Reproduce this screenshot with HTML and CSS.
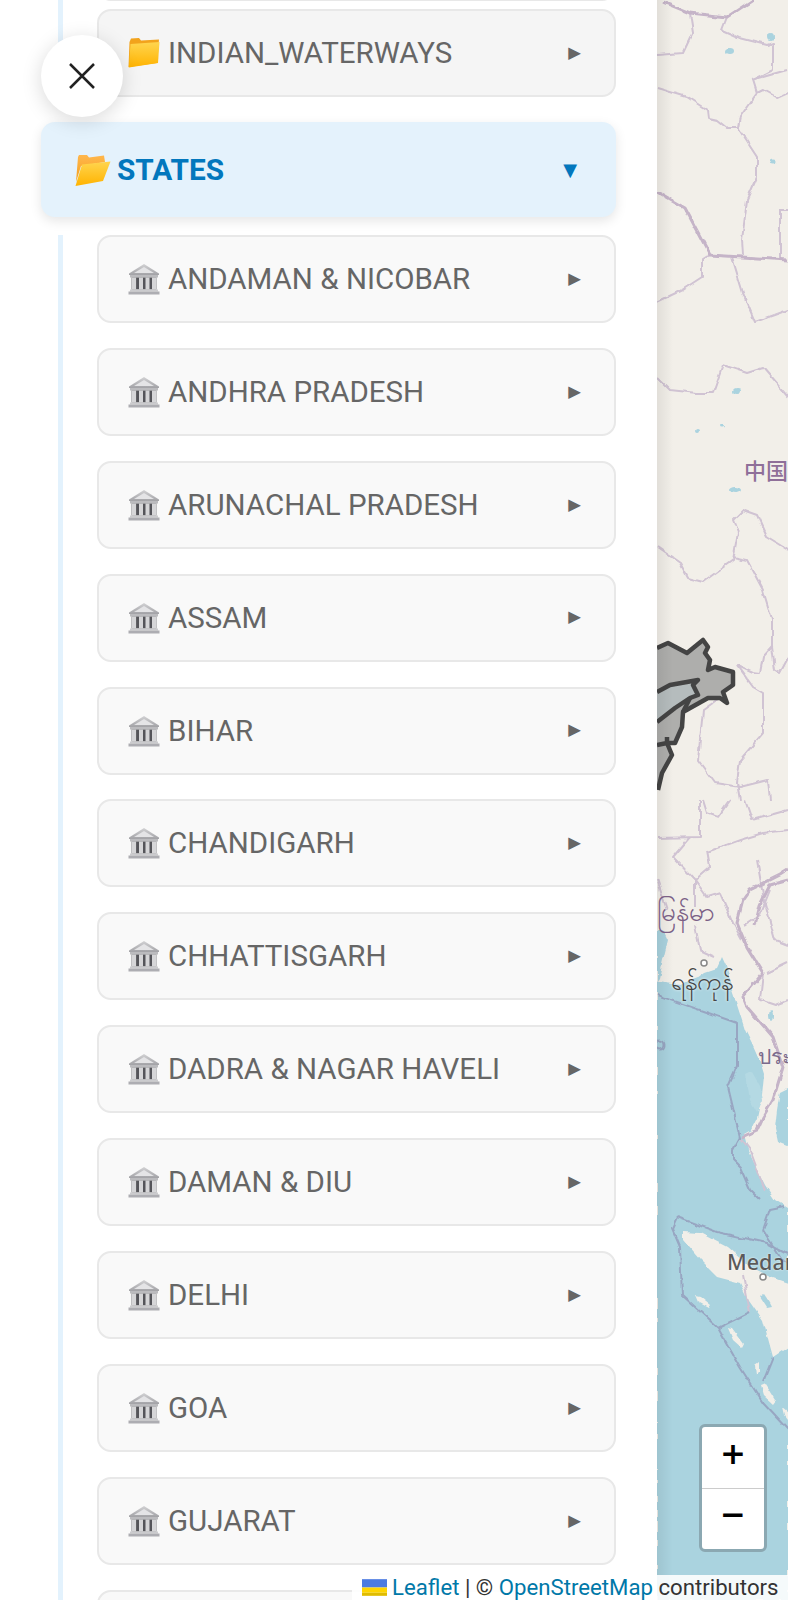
FILE: index.html
```html
<!DOCTYPE html>
<html lang="en">
<head>
<meta charset="utf-8">
<title>Layers</title>
<link rel="stylesheet" href="styles.css">
</head>
<body>
<svg class="defs" width="0" height="0" aria-hidden="true">
  <defs>
    <linearGradient id="fy" x1="0" y1="0" x2="0" y2="1"><stop offset="0" stop-color="#ffd54f"/><stop offset="1" stop-color="#ffb300"/></linearGradient>
    <linearGradient id="fo" x1="0" y1="0" x2="0" y2="1"><stop offset="0" stop-color="#ffb74d"/><stop offset="1" stop-color="#f59f1a"/></linearGradient>
    <linearGradient id="roof" x1="0" y1="0" x2="0" y2="1"><stop offset="0" stop-color="#d2d2d4"/><stop offset="1" stop-color="#a2a2a6"/></linearGradient>
    <linearGradient id="shade"><stop offset="0" stop-color="#000" stop-opacity=".07"/><stop offset="1" stop-color="#000" stop-opacity="0"/></linearGradient>
    <filter id="wiggle" x="-5%" y="-5%" width="110%" height="110%"><feTurbulence type="fractalNoise" baseFrequency=".09" numOctaves="2" seed="4"/><feDisplacementMap in="SourceGraphic" scale="5" xChannelSelector="R" yChannelSelector="G"/></filter>
    <symbol id="bank" viewBox="0 0 32 32">
      <path d="M16 1 31 10.500V12H1V10.500Z" fill="url(#roof)"/>
      <path d="M16 4 26 10H6Z" fill="#e4e4e6"/>
      <rect x="2" y="12" width="28" height="2.500" fill="#bbbbbe"/>
      <rect x="3.500" y="14.500" width="25" height="12" fill="#55555a"/>
      <rect x="3.500" y="14.500" width="4.600" height="12" fill="#d6d6d8"/>
      <rect x="11" y="14.500" width="4" height="12" fill="#d6d6d8"/>
      <rect x="17.500" y="14.500" width="4" height="12" fill="#d6d6d8"/>
      <rect x="24" y="14.500" width="4.600" height="12" fill="#d6d6d8"/>
      <rect x="2" y="26.500" width="28" height="2" fill="#cbcbce"/>
      <rect x=".5" y="28.500" width="31" height="3" fill="#adadb2"/>
    </symbol>
    <symbol id="folder" viewBox="0 0 32 32">
      <path d="M1.500 5 3 1.500 11 1 13 3.500 31 2.500 29 26 .5 30Z" fill="#f2a31c"/>
      <path d="M2.500 7 31.500 5 30 26 .8 30.500Z" fill="url(#fy)"/>
    </symbol>
    <symbol id="folder-open" viewBox="0 0 36 32">
      <path d="M1 28 3 3 4 1 12 1 14 3.500 29 1.500 30 8 6 12Z" fill="url(#fo)"/>
      <path d="M7 10.500 35.500 7.500 28 27 .5 32Z" fill="url(#fy)"/>
    </symbol>
  </defs>
</svg>

<div class="app">
  <aside class="sidebar">
    <div class="branch branch-top">
      <div class="row row-stub"></div>
      <div class="row row-folder">
        <svg class="ico ico-folder"><use href="#folder"/></svg>
        <span class="label">INDIAN_WATERWAYS</span><span class="arrow">▶</span>
      </div>
    </div>
    <div class="open-row">
      <svg class="ico ico-open"><use href="#folder-open"/></svg>
      <span class="open-label">STATES</span><span class="arrow-down">▼</span>
    </div>
    <div class="branch branch-states">
      <div class="row"><svg class="ico ico-bank"><use href="#bank"/></svg><span class="label">ANDAMAN &amp; NICOBAR</span><span class="arrow">▶</span></div>
      <div class="row"><svg class="ico ico-bank"><use href="#bank"/></svg><span class="label">ANDHRA PRADESH</span><span class="arrow">▶</span></div>
      <div class="row"><svg class="ico ico-bank"><use href="#bank"/></svg><span class="label">ARUNACHAL PRADESH</span><span class="arrow">▶</span></div>
      <div class="row"><svg class="ico ico-bank"><use href="#bank"/></svg><span class="label">ASSAM</span><span class="arrow">▶</span></div>
      <div class="row"><svg class="ico ico-bank"><use href="#bank"/></svg><span class="label">BIHAR</span><span class="arrow">▶</span></div>
      <div class="row"><svg class="ico ico-bank"><use href="#bank"/></svg><span class="label">CHANDIGARH</span><span class="arrow">▶</span></div>
      <div class="row"><svg class="ico ico-bank"><use href="#bank"/></svg><span class="label">CHHATTISGARH</span><span class="arrow">▶</span></div>
      <div class="row"><svg class="ico ico-bank"><use href="#bank"/></svg><span class="label">DADRA &amp; NAGAR HAVELI</span><span class="arrow">▶</span></div>
      <div class="row"><svg class="ico ico-bank"><use href="#bank"/></svg><span class="label">DAMAN &amp; DIU</span><span class="arrow">▶</span></div>
      <div class="row"><svg class="ico ico-bank"><use href="#bank"/></svg><span class="label">DELHI</span><span class="arrow">▶</span></div>
      <div class="row"><svg class="ico ico-bank"><use href="#bank"/></svg><span class="label">GOA</span><span class="arrow">▶</span></div>
      <div class="row"><svg class="ico ico-bank"><use href="#bank"/></svg><span class="label">GUJARAT</span><span class="arrow">▶</span></div>
      <div class="row"></div>
    </div>
  </aside>

  <main class="map">
    <svg class="map-art" viewBox="657 0 131 1600" preserveAspectRatio="none" aria-hidden="true">
      <rect class="land" x="657" y="0" width="131" height="1600"/>
      <g class="wiggly">
        <path class="sea" d="M657 930 664 932 668 940 663 960 659 978 657 981 680 984 697 978 705 972 717 968 722 957 727 968 732 990 738 1008 745 1030 752 1044 760 1062 764 1075 762 1095 757 1118 751 1130 744 1134 748 1150 755 1165 765 1185 775 1200 788 1208 788 1600 657 1600Z"/>
        <path class="sea" d="M788 1088 780 1092 777 1110 775 1128 778 1142 788 1146Z"/>
        <path class="land" d="M683 1232 700 1233 727 1247 750 1267 770 1277 788 1283 788 1347 773 1357 763 1320 747 1297 740 1283 717 1277 700 1260 683 1240Z"/>
        <path class="land" d="M695 1295 700 1296 711 1305 709 1308 698 1302Z"/>
        <path class="land" d="M728 1328 733 1329 744 1344 742 1348 733 1340Z"/>
        <path class="land" d="M755 1365 759 1362 759 1372 756 1375Z"/>
        <path class="land" d="M761 1386 766 1384 776 1400 773 1404 764 1396Z"/>
        <path class="land" d="M783 1408 788 1412 788 1420 785 1416Z"/>
        <path class="shoal" d="M746 1075 752 1072 760 1086 763 1100 757 1112 750 1100Z"/>
        <path class="lake" d="M760 1297 764 1294 770 1303 772 1307 767 1308Z"/>
        <ellipse class="lake" cx="730" cy="51" rx="4" ry="3"/><ellipse class="lake" cx="770" cy="37" rx="3" ry="4"/><ellipse class="lake" cx="773" cy="162" rx="3.500" ry="2.500"/><ellipse class="lake" cx="737" cy="391" rx="4" ry="3"/><ellipse class="lake" cx="735" cy="490" rx="6" ry="3"/><ellipse class="lake" cx="697" cy="431" rx="2" ry="2"/><ellipse class="lake" cx="722" cy="426" rx="2" ry="1.500"/><ellipse class="lake" cx="771" cy="1015" rx="2" ry="6"/>
        <g class="border">
          <path d="M690 13 693 32 683 53 657 55"/>
          <path d="M727 17 722 30 740 38 767 45 773 43 773 70 753 80 757 93 740 117 738 128"/>
          <path d="M657 88 687 97 707 110 708 118 717 120 727 128 738 128 757 157 757 177 747 200 742 240 743 255"/>
          <path d="M710 255 702 260 702 277 682 290 657 302"/>
          <path d="M732 257 743 293 755 322 788 310"/>
          <path d="M757 93 763 90 777 98 788 93"/>
          <path d="M752 80 788 70"/>
          <path d="M780 258 780 210 788 210"/>
          <path d="M657 377 670 390 697 393 713 393 723 365 747 373 763 368 788 397"/>
          <path d="M657 547 680 563 688 578 703 582 733 560 738 533 733 520 743 510 757 515 767 537 788 550"/>
          <path d="M733 557 747 560 763 590 772 620 772 647 775 670 780 673 788 658"/>
          <path d="M772 647 763 657 760 673 752 672 737 665"/>
          <path d="M737 665 753 687 763 693 763 733 740 760 737 783 740 800"/>
          <path d="M717 700 703 710 698 760 715 783 740 787 768 780 770 800"/>
          <path d="M657 838 700 837 700 800"/>
          <path d="M703 800 707 813 718 817 730 800"/>
          <path d="M690 837 673 857 695 880 707 897 720 893 733 923 742 940"/>
          <path d="M707 850 710 867 695 880 695 907"/>
          <path d="M707 852 740 840 763 833 788 830"/>
          <path d="M657 880 667 910"/>
          <path d="M695 925 700 950 715 957"/>
          <path d="M788 963 767 973"/>
          <path d="M745 800 752 820 788 810"/>
          <path d="M757 860 764 900 775 940 788 945"/>
          <path d="M770 890 760 915 745 925"/>
          <path d="M763 973 760 1000 775 1005 788 1000"/>
          <path d="M740 1137 750 1150 765 1190"/>
          <path d="M743 1275 750 1312"/>
        </g>
        <g class="border sea-line">
          <path d="M657 995 737 1023 737 1067 728 1087 740 1137 733 1150 733 1160 740 1167 750 1190 760 1200"/>
          <circle cx="660" cy="1045" r="4.500"/>
          <path d="M677 1217 672 1228 680 1247 682 1295 718 1328 740 1367 763 1403 788 1430"/>
          <path d="M677 1217 717 1232 767 1243 788 1254"/>
          <path d="M718 1328 750 1312"/>
          <path d="M773 1357 763 1382"/>
          <path d="M763 1230 780 1257 788 1262"/>
          <path d="M763 1230 770 1210 785 1207"/>
        </g>
        <g class="border strong">
          <path d="M663 2 690 13 727 17 753 0"/>
          <path d="M657 192 685 208 710 255 788 260"/>
          <path d="M788 870 780 875 750 890 743 900 737 923 747 947 763 973 743 997 747 1007 773 1037 783 1067 773 1100 763 1117 757 1130 742 1137"/>
          <path d="M788 880 770 885 760 905 755 925"/>
        </g>
      </g>
      <path class="region" d="M657 648 668 643 687 653 703 640 708 647 705 653 710 660 708 670 715 667 733 672 733 685 723 692 727 703 720 698 708 698 683 712 682 727 675 743 667 743 667 748 672 755 662 773 658 790 657 790Z"/>
      <path class="region-light" d="M657 692 670 685 698 680 693 685 698 695 690 698 675 708 657 722Z"/>
      <g class="region-line">
        <path d="M657 648 668 643 687 653 703 640 708 647 705 653 710 660 708 670 715 667 733 672 733 685 723 692 727 703 720 698 708 698 683 712 682 727 675 743 667 743 672 755 662 773 658 790"/>
        <path d="M657 692 670 685 698 680 693 685 698 695 690 698 675 708 657 722"/>
        <path d="M657 745 667 743 667 737"/>
        <path d="M683 712 690 698"/>
      </g>
      <circle class="city" cx="704" cy="963" r="3"/>
      <circle class="city" cx="763" cy="1277" r="3"/>
      <rect class="edge-shade" x="657" y="0" width="16" height="1600"/>
    </svg>

    <span class="place place-cn">中国</span>
    <span class="place place-mm">မြန်မာ</span>
    <span class="place place-yg">ရန်ကုန်</span>
    <span class="place place-th">ประ</span>
    <span class="place place-medan">Medan</span>

    <div class="zoom">
      <span class="zoom-btn zoom-in">+</span>
      <span class="zoom-btn">−</span>
    </div>
  </main>
</div>

<button class="close" type="button" aria-label="Close">
  <svg width="26" height="26" viewBox="0 0 26 26"><path d="M1 1 25 25M25 1 1 25"/></svg>
</button>

<div class="attribution">
  <svg class="flag" viewBox="0 0 12 8" aria-hidden="true"><rect width="12" height="4" fill="#4c7be1"/><rect y="4" width="12" height="2.500" fill="#ffd500"/><rect y="6.500" width="12" height="1.500" fill="#e0bc00"/></svg>
  <span class="attr-text"><a href="#">Leaflet</a> | © <a href="#">OpenStreetMap</a> contributors</span>
</div>
</body>
</html>
```
FILE: styles.css
```css
* { box-sizing: border-box; }
html, body { margin: 0; height: 1600px; overflow: hidden; background: #fff; }
body { position: relative; font-family: Roboto, "Noto Sans", sans-serif; }
.defs { position: absolute; }

.app { display: flex; height: 1600px; }
.sidebar { width: 657px; flex: none; background: #fff; overflow: hidden; }
.map { position: relative; flex: 1; overflow: hidden; background: #f2efe9; }
.map-art { display: block; width: 100%; height: 100%; filter: blur(.5px); }
.wiggly { filter: url(#wiggle); }

.branch { margin-left: 58px; width: 558px; padding-left: 34px; border-left: 5px solid #e3f2fd; display: flex; flex-direction: column; }
.branch-top { margin-top: -60px; height: 157px; gap: 8px; justify-content: flex-end; }
.branch-states { margin-top: 18px; gap: 24.900px; }

.row { height: 88px; flex: none; display: flex; align-items: center; padding: 0 33px 0 29px; background: #f9f9f9; border: 2px solid #e8e8e8; border-radius: 14px; }
.row-folder { background: #f5f5f5; }
.row-stub { height: 61px; }

.ico { flex: none; display: block; }
.ico-bank { width: 32px; height: 32px; margin-right: 8px; }
.ico-folder { width: 32px; height: 32px; margin-right: 8px; }
.ico-open { width: 36px; height: 32px; margin-right: 6px; }

.label { flex: 1; font-size: 29.500px; color: #666; white-space: nowrap; }
.arrow { font-family: "DejaVu Sans", sans-serif; font-size: 16.500px; color: #666; line-height: 1; }

.open-row { margin: 25px 0 0 41px; width: 575px; height: 95px; display: flex; align-items: center; padding: 0 39px 0 34px; background: #e4f2fc; border-radius: 14px; box-shadow: 0 4px 12px rgba(0, 0, 0, .1); position: relative; }
.open-label { flex: 1; font-size: 29.800px; font-weight: 700; color: #0277bd; }
.arrow-down { font-family: "DejaVu Sans", sans-serif; font-size: 18px; color: #0277bd; line-height: 1; }

.land { fill: #f2efe9; }
.sea { fill: #aad3df; }
.shoal { fill: #b4d9e3; }
.lake { fill: #aad3df; }
.border { fill: none; stroke: #d0c3d3; stroke-width: 2; stroke-linejoin: round; }
.border.strong { stroke: #c5b4c8; stroke-width: 3; }
.border.sea-line { stroke: #98a6c2; }
.region { fill: #aeaeac; }
.region-light { fill: #b5bcbd; }
.region-line { fill: none; stroke: #444; stroke-width: 4.500; stroke-linejoin: round; }
.city { fill: #fff; stroke: #888; stroke-width: 1.500; }
.edge-shade { fill: url(#shade); }

.place { position: absolute; white-space: nowrap; line-height: 1; }
.place-cn { left: 87px; top: 458px; font-family: "Noto Sans CJK SC", sans-serif; font-size: 22px; font-weight: 500; color: #8f6f99; }
.place-mm { left: 0; top: 898px; font-family: "Noto Sans", "DejaVu Sans", sans-serif; font-size: 26px; color: #7b5f86; }
.place-yg { left: 14px; top: 968px; font-family: "Noto Sans", "DejaVu Sans", sans-serif; font-size: 25px; color: #444; text-shadow: 0 0 3px #fff; }
.place-th { left: 101px; top: 1046px; font-family: "Noto Sans", "DejaVu Sans", sans-serif; font-size: 21px; color: #7b6a8c; }
.place-medan { left: 70px; top: 1251px; font-family: "Noto Sans", sans-serif; font-size: 21.500px; font-weight: 500; color: #5a5a5a; text-shadow: 0 0 2px #fff; }

.zoom { position: absolute; left: 42px; top: 1424px; width: 68px; height: 128px; border: 3.500px solid #8ba8b2; border-radius: 6px; background: #fff; display: flex; flex-direction: column; }
.zoom-btn { flex: 1; display: flex; align-items: center; justify-content: center; padding-bottom: 8px; font-family: "DejaVu Sans", sans-serif; font-weight: 700; font-size: 31px; line-height: 1; color: #000; }
.zoom-in { border-bottom: 1.500px solid #ccc; }

.close { position: absolute; left: 41px; top: 35px; width: 82px; height: 82px; padding: 0; border: 0; border-radius: 50%; background: #fff; box-shadow: 0 4px 20px rgba(0, 0, 0, .15); display: flex; align-items: center; justify-content: center; }
.close path { fill: none; stroke: #222; stroke-width: 2.500; }

.attribution { position: absolute; right: 0; bottom: 0; width: 436px; height: 25px; padding: 0 0 0 10px; display: flex; align-items: center; gap: 5px; white-space: nowrap; font-size: 22.200px; line-height: 25px; color: #333; background: rgba(255, 255, 255, .88); }
.attribution a { color: #0078a8; text-decoration: none; }
.flag { width: 25px; height: 17px; flex: none; }
```
